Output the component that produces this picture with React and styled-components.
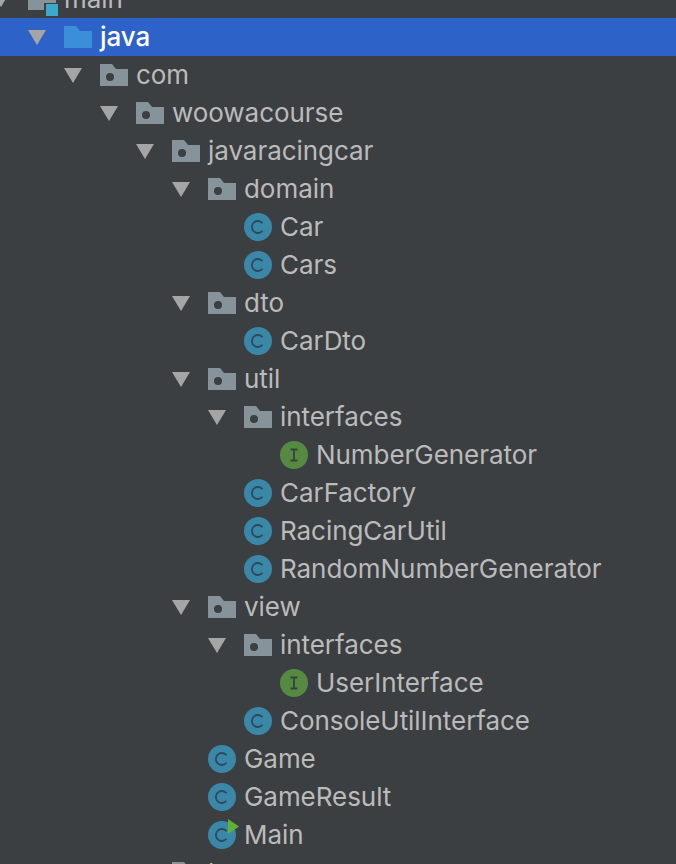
import React from 'react';
import styled, { createGlobalStyle } from 'styled-components';

const GlobalStyle = createGlobalStyle`
  html, body {
    margin: 0;
    padding: 0;
    background: #3c3f41;
  }
`;

const nodes = [
  { depth: 0, name: 'main', kind: 'module', open: true },
  { depth: 1, name: 'java', kind: 'source', open: true, selected: true },
  { depth: 2, name: 'com', kind: 'package', open: true },
  { depth: 3, name: 'woowacourse', kind: 'package', open: true },
  { depth: 4, name: 'javaracingcar', kind: 'package', open: true },
  { depth: 5, name: 'domain', kind: 'package', open: true },
  { depth: 6, name: 'Car', kind: 'class' },
  { depth: 6, name: 'Cars', kind: 'class' },
  { depth: 5, name: 'dto', kind: 'package', open: true },
  { depth: 6, name: 'CarDto', kind: 'class' },
  { depth: 5, name: 'util', kind: 'package', open: true },
  { depth: 6, name: 'interfaces', kind: 'package', open: true },
  { depth: 7, name: 'NumberGenerator', kind: 'interface' },
  { depth: 6, name: 'CarFactory', kind: 'class' },
  { depth: 6, name: 'RacingCarUtil', kind: 'class' },
  { depth: 6, name: 'RandomNumberGenerator', kind: 'class' },
  { depth: 5, name: 'view', kind: 'package', open: true },
  { depth: 6, name: 'interfaces', kind: 'package', open: true },
  { depth: 7, name: 'UserInterface', kind: 'interface' },
  { depth: 6, name: 'ConsoleUtilInterface', kind: 'class' },
  { depth: 5, name: 'Game', kind: 'class' },
  { depth: 5, name: 'GameResult', kind: 'class' },
  { depth: 5, name: 'Main', kind: 'class', runnable: true },
  { depth: 4, name: 'bean', kind: 'package' },
];

function Arrow() {
  return (
    <svg width="18" height="15" viewBox="0 0 18 15">
      <path d="M0 0H18L9 15Z" fill="#a5a5a5" />
    </svg>
  );
}

function FolderIcon({ kind }) {
  if (kind === 'module') {
    return (
      <svg width="30" height="34" viewBox="0 0 30 34">
        <path d="M0 6H28V21H16V28H0Z" fill="#87939a" />
        <rect x="18" y="22" width="12" height="12" fill="#3ba9cb" />
      </svg>
    );
  }
  if (kind === 'source') {
    return (
      <svg width="28" height="22" viewBox="0 0 28 22">
        <path d="M0 0H12L16 5H28V22H0Z" fill="#3a8fd8" />
      </svg>
    );
  }
  return (
    <svg width="28" height="22" viewBox="0 0 28 22">
      <path d="M0 0H12L16 5H28V22H0Z" fill="#87939a" />
      <circle cx="10" cy="13" r="4" fill="#3c3f41" />
    </svg>
  );
}

function TypeIcon({ kind, runnable }) {
  const isClass = kind === 'class';
  return (
    <TypeIconBox>
      <svg width="28" height="28" viewBox="0 0 28 28">
        <circle cx="14" cy="14" r="14" fill={isClass ? '#3a87a8' : '#568a42'} />
        {isClass ? (
          <path d="M18.5 10.2A6 6 0 1 0 18.5 17.8" fill="none" stroke="#2c4a5c" strokeWidth="1.8" />
        ) : (
          <path d="M10.5 8.5H17.5M14 8.5V19.5M10.5 19.5H17.5" fill="none" stroke="#38423a" strokeWidth="1.8" />
        )}
      </svg>
      {runnable && (
        <RunBadge width="11" height="15" viewBox="0 0 11 15">
          <path d="M0 0L11 7.5L0 15Z" fill="#5fb135" />
        </RunBadge>
      )}
    </TypeIconBox>
  );
}

export default function App() {
  return (
    <>
      <GlobalStyle />
      <Tree>
        {nodes.map((node, i) => (
          <Row key={i} $selected={node.selected}>
            <ArrowSlot $depth={node.depth}>{node.open && <Arrow />}</ArrowSlot>
            <IconSlot>
              {node.kind === 'class' || node.kind === 'interface' ? (
                <TypeIcon kind={node.kind} runnable={node.runnable} />
              ) : (
                <FolderIcon kind={node.kind} />
              )}
            </IconSlot>
            <Label $selected={node.selected}>{node.name}</Label>
          </Row>
        ))}
      </Tree>
    </>
  );
}

const Tree = styled.div`
  height: 864px;
  overflow: hidden;
  background: #3c3f41;
  font-family: 'Inter', 'Liberation Sans', sans-serif;
`;

const Row = styled.div`
  display: flex;
  align-items: center;
  height: 38px;
  background: ${(props) => (props.$selected ? '#2d62c8' : 'transparent')};
  &:first-child {
    margin-top: -20px;
  }
`;

const ArrowSlot = styled.div`
  display: flex;
  align-items: center;
  width: 36px;
  flex: none;
  margin-left: ${(props) => props.$depth * 36 - 8}px;
`;

const IconSlot = styled.div`
  display: flex;
  align-items: center;
  width: 36px;
  flex: none;
`;

const TypeIconBox = styled.div`
  position: relative;
  width: 28px;
  height: 28px;
`;

const RunBadge = styled.svg`
  position: absolute;
  left: 20px;
  top: -2px;
`;

const Label = styled.span`
  font-size: 26px;
  letter-spacing: -0.05px;
  padding-bottom: 2px;
  white-space: nowrap;
  color: ${(props) => (props.$selected ? '#ffffff' : '#bbbbbb')};
  font-weight: ${(props) => (props.$selected ? 500 : 400)};
`;
